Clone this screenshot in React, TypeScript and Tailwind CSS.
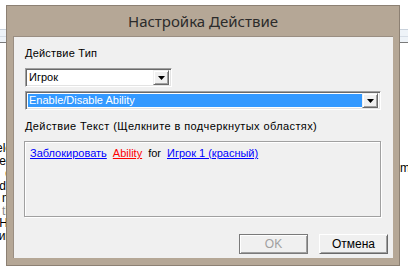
import React from "react";

const sans = { fontFamily: '"Liberation Sans", Arial, sans-serif' };

function DropBtn() {
  return (
    <div className="flex h-[15px] w-[16px] items-center justify-center bg-[#f0f0f0] border border-t-[#f0f0f0] border-l-[#f0f0f0] border-r-[#696969] border-b-[#696969] shadow-[inset_1px_1px_0_#ffffff,inset_-1px_-1px_0_#a0a0a0]">
      <svg width="7" height="4" viewBox="0 0 7 4">
        <polygon points="0,0 7,0 3.5,4" fill="#000" />
      </svg>
    </div>
  );
}

function Combo({ text, width, selected }: { text: string; width: string; selected?: boolean }) {
  return (
    <div
      className={`flex h-[19px] ${width} items-center border border-t-[#a0a0a0] border-l-[#a0a0a0] border-r-white border-b-white bg-white shadow-[inset_1px_1px_0_#696969,inset_-1px_-1px_0_#e3e3e3] p-[2px]`}
    >
      <div
        className={`flex h-full flex-1 items-center pl-[1px] text-[11px] leading-none ${selected ? "bg-[#3399ff] text-white" : "text-black"}`}
      >
        {text}
      </div>
      <DropBtn />
    </div>
  );
}

export default function App() {
  const bgLines = ["ele", "ec", "d", "ds", "m", "th", "H)", "ин"];
  return (
    <div className="relative h-[272px] w-[408px] overflow-hidden bg-white" style={sans}>
      {/* background page */}
      <div className="absolute left-0 top-[29px] h-px w-full bg-[#c9d2dc]" />
      <div className="absolute left-0 top-[30px] h-[12px] w-full bg-[#eef3f8]" />
      <div className="absolute left-0 top-[36px] h-px w-full bg-[#d6dde6]" />
      <div className="absolute left-0 top-[42px] h-px w-full bg-[#7a7a7a]" />
      <div className="absolute left-[-8px] top-[142px] flex flex-col text-[12px] leading-[12.5px] text-black">
        {bgLines.map((l, i) => (
          <span key={i} className={`text-right w-[20px] ${i === 5 ? "text-[#888]" : ""}`}>
            {l}
          </span>
        ))}
      </div>
      <div className="absolute left-[400px] top-[159px] text-[12px] text-black">m</div>

      {/* dialog window */}
      <div className="absolute left-[6px] top-[5px] flex h-[261px] w-[394px] flex-col border border-[#8c8073] bg-[#b5a796]">
        <div
          className="flex h-[30px] items-center justify-center text-[15px] text-[#2b2b2b]"
          style={{ fontFamily: '"Noto Sans", "Open Sans", sans-serif' }}
        >
          Настройка Действие
        </div>
        <div className="mx-[6px] mb-[7px] flex flex-1 flex-col border-l border-t border-[#9a8e82] bg-[#f0f0f0] pl-[11px] text-[11px] text-black">
          <div className="mt-[10px] leading-[13px] tracking-[0.2px]">Действие Тип</div>
          <div className="mt-[8px]">
            <Combo text="Игрок" width="w-[147px]" />
          </div>
          <div className="mt-[4px]">
            <Combo text="Enable/Disable Ability" width="w-[356px]" selected />
          </div>
          <div className="mt-[10px] leading-[13px] tracking-[0.4px]">Действие Текст (Щелкните в подчеркнутых областях)</div>
          <div className="mt-[8px] ml-[-1px] h-[76px] w-[357px] border border-[#a0a0a0] shadow-[1px_1px_0_#ffffff,inset_1px_1px_0_#ffffff]">
            <div className="mt-[5px] ml-[5px] flex gap-[6px] text-[11px] leading-[13px]">
              <span className="text-[#0000ff] underline">Заблокировать</span>
              <span className="text-[#ff0000] underline">Ability</span>
              <span>for</span>
              <span className="text-[#0000ff] underline">Игрок 1 (красный)</span>
            </div>
          </div>
          <div className="mt-[17px] flex gap-[11px] pl-[214px]">
            <div className="flex h-[20px] w-[69px] items-center justify-center border border-[#7a7a7a] bg-[#f0f0f0] text-[12px] text-[#a0a0a0] shadow-[inset_1px_1px_0_#ffffff,inset_-1px_-1px_0_#a0a0a0]">
              OK
            </div>
            <div className="flex h-[20px] w-[69px] items-center justify-center border border-t-white border-l-white border-r-[#696969] border-b-[#696969] bg-[#f0f0f0] text-[12px] text-black shadow-[inset_1px_1px_0_#f0f0f0,inset_-1px_-1px_0_#a0a0a0]">
              Отмена
            </div>
          </div>
        </div>
      </div>
    </div>
  );
}
